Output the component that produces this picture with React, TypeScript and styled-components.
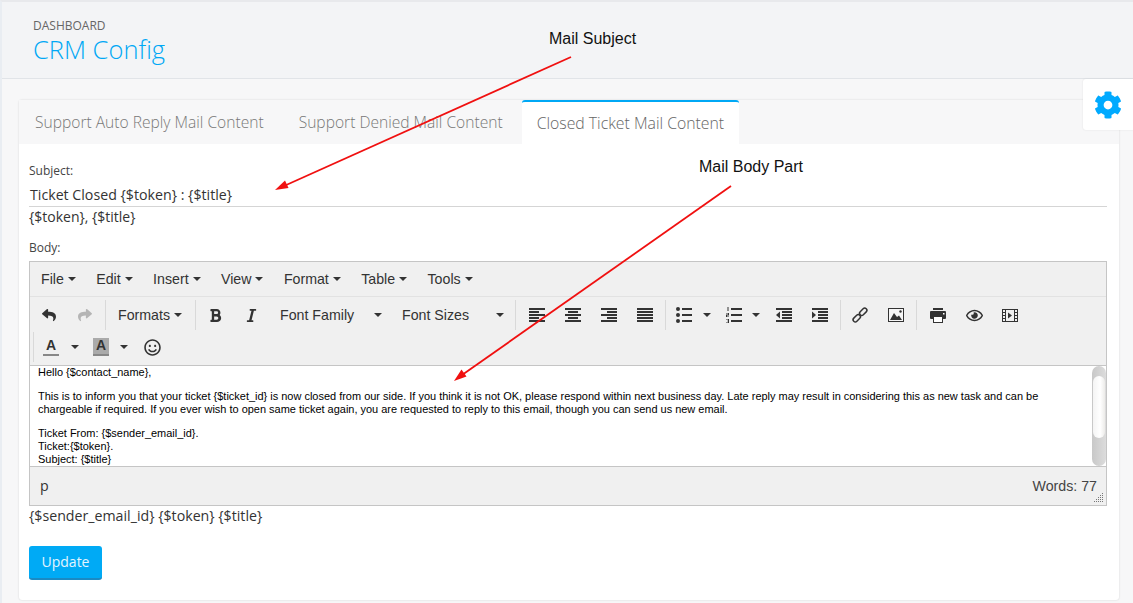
import React from "react";
import styled, { createGlobalStyle } from "styled-components";
import { FaBold, FaCog, FaItalic, FaRegEye, FaRegSmile, FaReply, FaShare } from "react-icons/fa";

const GlobalStyle = createGlobalStyle`
  html, body { margin: 0; padding: 0; background: #f7f7f8; }
  * { box-sizing: border-box; }
`;

const menus = ["File", "Edit", "Insert", "View", "Format", "Table", "Tools"];

const introText =
  "This is to inform you that your ticket {$ticket_id} is now closed from our side. If you think it is not OK, please respond within next business day. Late reply may result in considering this as new task and can be chargeable if required. If you ever wish to open same ticket again, you are requested to reply to this email, though you can send us new email.";

function Lines({ kind }: { kind: "left" | "center" | "right" | "full" }) {
  const rows = [0, 3, 6, 9, 12];
  return (
    <svg width="16" height="14" viewBox="0 0 16 14" fill="#333">
      {rows.map((y, i) => {
        const w = kind === "full" || i % 2 === 0 ? 16 : 10;
        const x = kind === "left" || kind === "full" ? 0 : kind === "center" ? (16 - w) / 2 : 16 - w;
        return <rect key={y} x={x} y={y} width={w} height="2" />;
      })}
    </svg>
  );
}

function BulletList() {
  return (
    <svg width="16" height="16" viewBox="0 0 16 16" fill="#333">
      <circle cx="2" cy="2" r="2" />
      <circle cx="2" cy="8" r="2" />
      <circle cx="2" cy="14" r="2" />
      <rect x="6" y="1" width="10" height="2" />
      <rect x="6" y="7" width="10" height="2" />
      <rect x="6" y="13" width="10" height="2" />
    </svg>
  );
}

function NumberList() {
  return (
    <svg width="16" height="16" viewBox="0 0 16 16" fill="#333">
      <rect x="1.5" y="0" width="1" height="4" />
      <path d="M0 6h3v2.5H1v1h2v.6H0V7.5h2v-1H0zM0 12h3v4H0v-.6h2v-1.1H1v-.6h1v-1.1H0z" />
      <rect x="5" y="1" width="11" height="2" />
      <rect x="5" y="7" width="11" height="2" />
      <rect x="5" y="13" width="11" height="2" />
    </svg>
  );
}

function Indent({ out }: { out?: boolean }) {
  return (
    <svg width="16" height="14" viewBox="0 0 16 14" fill="#333">
      <rect x="0" y="0" width="16" height="2" />
      <rect x="6" y="3" width="10" height="2" />
      <rect x="6" y="6" width="10" height="2" />
      <rect x="6" y="9" width="10" height="2" />
      <rect x="0" y="12" width="16" height="2" />
      <path d={out ? "M4 3.5v7L0 7z" : "M0 3.5v7L4 7z"} />
    </svg>
  );
}

function LinkIcon() {
  return (
    <svg width="16" height="16" viewBox="0 0 16 16" fill="none" stroke="#333" strokeWidth="1.5">
      <rect x="-4" y="-2.2" width="8.5" height="4.4" rx="2.2" transform="translate(4.6 11.4) rotate(-45)" />
      <rect x="-4.5" y="-2.2" width="8.5" height="4.4" rx="2.2" transform="translate(11.4 4.6) rotate(-45)" />
    </svg>
  );
}

function ImageIcon() {
  return (
    <svg width="16" height="14" viewBox="0 0 16 14">
      <rect x="0.5" y="0.5" width="15" height="13" fill="#f6f6f6" stroke="#333" />
      <path d="M2 12l4-7 3 4 2-1.5 3 4.5z" fill="#333" />
      <circle cx="12.5" cy="3.5" r="1.2" fill="#333" />
    </svg>
  );
}

function PrintIcon() {
  return (
    <svg width="16" height="15" viewBox="0 0 16 15" fill="#333">
      <rect x="3" y="0" width="10" height="2" />
      <rect x="0" y="3" width="16" height="8" rx="1" />
      <rect x="3.5" y="8.5" width="9" height="6" fill="#fff" stroke="#333" />
      <rect x="13" y="5" width="1.5" height="1.5" fill="#fff" />
    </svg>
  );
}

function MediaIcon() {
  return (
    <svg width="16" height="13" viewBox="0 0 16 13" fill="#333">
      <path fillRule="evenodd" d="M0 0h16v13H0zM1 1v2h2V1zM1 4v2h2V4zM1 7v2h2V7zM1 10v2h2v-2zM13 1v2h2V1zM13 4v2h2V4zM13 7v2h2V7zM13 10v2h2v-2zM4 1v11h8V1z" />
      <path d="M6 3.5v6l4-3z" />
    </svg>
  );
}

export default function App() {
  return (
    <Page>
      <GlobalStyle />
      <Header>
        <Crumb>Dashboard</Crumb>
        <Title>CRM Config</Title>
      </Header>

      <Card>
        <Tabs>
          <Tab>Support Auto Reply Mail Content</Tab>
          <Tab>Support Denied Mail Content</Tab>
          <Tab $active>Closed Ticket Mail Content</Tab>
        </Tabs>
        <Pane>
          <Label>Subject:</Label>
          <SubjectInput>{"Ticket Closed {$token} : {$title}"}</SubjectInput>
          <Hint>{"{$token}, {$title}"}</Hint>
          <BodyLabel>Body:</BodyLabel>

          <Editor>
            <MenuBar>
              {menus.map((m) => (
                <MenuItem key={m}>
                  {m}
                  <Caret />
                </MenuItem>
              ))}
            </MenuBar>
            <Toolbar>
              <ToolRow>
                <Group>
                  <IconBtn><FaReply size={14} color="#333" /></IconBtn>
                  <IconBtn><FaShare size={14} color="#b5b5b5" /></IconBtn>
                </Group>
                <Group>
                  <MenuItem $tool>Formats<Caret /></MenuItem>
                </Group>
                <Group $start={1}>
                  <IconBtn><FaBold size={15} color="#333" /></IconBtn>
                  <IconBtn><FaItalic size={15} color="#333" /></IconBtn>
                  <ListBox>Font Family<Caret /></ListBox>
                  <ListBox>Font Sizes<Caret /></ListBox>
                </Group>
                <Group $start={3}>
                  <IconBtn><Lines kind="left" /></IconBtn>
                  <IconBtn><Lines kind="center" /></IconBtn>
                  <IconBtn><Lines kind="right" /></IconBtn>
                  <IconBtn><Lines kind="full" /></IconBtn>
                </Group>
                <Group>
                  <SplitBtn $gap={11} $end={5}><BulletList /><Caret /></SplitBtn>
                  <SplitBtn $gap={10} $end={6}><NumberList /><Caret /></SplitBtn>
                  <IconBtn><Indent out /></IconBtn>
                  <IconBtn><Indent /></IconBtn>
                </Group>
                <Group $start={1}>
                  <IconBtn><LinkIcon /></IconBtn>
                  <IconBtn><ImageIcon /></IconBtn>
                </Group>
                <Group $last $start={3}>
                  <IconBtn><PrintIcon /></IconBtn>
                  <IconBtn><FaRegEye size={17} color="#333" /></IconBtn>
                  <IconBtn><MediaIcon /></IconBtn>
                </Group>
              </ToolRow>
              <ToolRow>
                <Group $last $lead>
                  <SplitBtn $gap={12} $end={3} $flush>
                    <ColorA>A</ColorA>
                    <Caret />
                  </SplitBtn>
                  <SplitBtn $gap={11} $end={6} $wide>
                    <ColorA $filled>A</ColorA>
                    <Caret />
                  </SplitBtn>
                  <IconBtn><FaRegSmile size={17} color="#333" /></IconBtn>
                </Group>
              </ToolRow>
            </Toolbar>
            <Content>
              <p>{"Hello {$contact_name},"}</p>
              <p>{introText}</p>
              <p>
                {"Ticket From: {$sender_email_id}."}<br />
                {"Ticket:{$token}."}<br />
                {"Subject: {$title}"}
              </p>
              <ScrollTrack>
                <ScrollThumb />
              </ScrollTrack>
            </Content>
            <StatusBar>
              <span>p</span>
              <Words>Words: 77</Words>
              <Grip width="10" height="10" viewBox="0 0 10 10" fill="#777">
                {[[8, 0], [6, 2], [8, 2], [4, 4], [6, 4], [8, 4], [2, 6], [4, 6], [6, 6], [8, 6], [0, 8], [2, 8], [4, 8], [6, 8], [8, 8]].map(([x, y]) => (
                  <rect key={`${x}-${y}`} x={x} y={y} width="1" height="1" />
                ))}
              </Grip>
            </StatusBar>
          </Editor>

          <TokensHint>{"{$sender_email_id} {$token} {$title}"}</TokensHint>
          <UpdateButton>Update</UpdateButton>
        </Pane>
      </Card>

      <SettingsTab>
        <FaCog size={28} color="#00aaff" />
      </SettingsTab>

      <Note $x={549} $y={30}>Mail Subject</Note>
      <Note $x={699} $y={158}>Mail Body Part</Note>
      <Arrows viewBox="0 0 1133 603" width="1133" height="603">
        <line x1="571" y1="57" x2="284" y2="186" stroke="#f01010" strokeWidth="1.8" />
        <path d="M275 190l10-9.5 3.5 7.5z" fill="#f01010" />
        <line x1="731" y1="186" x2="462" y2="375" stroke="#f01010" strokeWidth="1.8" />
        <path d="M454 381l7.5-11.5 5 7z" fill="#f01010" />
      </Arrows>
    </Page>
  );
}

const Page = styled.div`
  position: relative;
  width: 1133px;
  height: 603px;
  overflow: hidden;
  background: #f7f7f8;
  border-left: 2px solid #e9edf2;
  border-top: 2px solid #e8e9ec;
  font-family: "Open Sans", sans-serif;
  color: #333;
`;

const Header = styled.header`
  height: 77px;
  padding: 17px 0 0 31px;
  background: #f3f4f6;
  border-bottom: 1px solid #e1e4e8;
`;

const Crumb = styled.div`
  font-size: 12px;
  line-height: 13px;
  text-transform: uppercase;
  color: #666;
`;

const Title = styled.h1`
  margin: 0;
  font-size: 25.5px;
  line-height: 34px;
  font-weight: 300;
  color: #00a8f5;
`;

const Card = styled.section`
  margin: 21px 14px 0 17px;
  height: 500px;
  background: #fff;
  border-radius: 3px;
  box-shadow: 0 0 2px rgba(0, 0, 0, 0.16);
`;

const Tabs = styled.nav`
  display: flex;
  height: 44px;
  background: #f7f7f8;
`;

const Tab = styled.div<{ $active?: boolean }>`
  padding: ${(p) => (p.$active ? "11px 15px 0" : "12px 19px 0 17px")};
  font-size: ${(p) => (p.$active ? 15.8 : 15.6)}px;
  font-weight: 300;
  line-height: 20px;
  color: #777;

  &:first-child {
    padding-left: 16px;
    padding-right: 18px;
  }

  ${(p) =>
    p.$active &&
    `
    background: #fff;
    color: #666;
    border-top: 2px solid #00a8f5;
    border-radius: 3px 3px 0 0;
  `}
`;

const Pane = styled.div`
  padding: 18px 12px 0 10px;
`;

const Label = styled.div`
  font-size: 12px;
  line-height: 17px;
  color: #444;
`;

const SubjectInput = styled.div`
  margin-top: 6px;
  padding: 0 1px 2px;
  height: 22px;
  font-size: 14.2px;
  line-height: 20px;
  color: #333;
  border-bottom: 1px solid #d5d5d5;
`;

const Hint = styled.div`
  font-size: 14px;
  line-height: 20px;
  color: #333;
`;

const BodyLabel = styled(Label)`
  margin-top: 12px;
  margin-bottom: 5px;
`;

const Editor = styled.div`
  width: 1078px;
  border: 1px solid #c5c5c5;
  background: #f0f0f0;
  font-family: "Liberation Sans", Arial, sans-serif;
`;

const MenuBar = styled.div`
  display: flex;
  align-items: center;
  gap: 20.4px;
  height: 35px;
  padding: 0 0 0 11px;
  border-bottom: 1px solid #e2e2e2;
`;

const MenuItem = styled.div<{ $tool?: boolean }>`
  display: inline-flex;
  align-items: center;
  gap: 4px;
  font-size: 14.2px;
  color: #333;
  ${(p) => p.$tool && "padding: 0 11px 0 12px;"}
`;

const Caret = styled.span`
  display: inline-block;
  width: 0;
  height: 0;
  border-left: 4px solid transparent;
  border-right: 4px solid transparent;
  border-top: 4px solid #333;
`;

const Toolbar = styled.div`
  height: 69px;
  padding: 2px 0 0 1px;
  border-bottom: 1px solid #c5c5c5;
`;

const ToolRow = styled.div`
  display: flex;
  height: 32px;
`;

const Group = styled.div<{ $last?: boolean; $lead?: boolean; $start?: number }>`
  display: flex;
  align-items: center;
  height: 30px;
  margin-top: 1px;
  padding-left: ${(p) => p.$start ?? 0}px;
  padding-right: 2px;
  border-right: ${(p) => (p.$last ? "none" : "1px solid #d9d9d9")};
  ${(p) => p.$lead && "margin-left: 2px; border-left: 1px solid #d9d9d9; padding-left: 9px;"}
`;

const IconBtn = styled.div`
  display: flex;
  align-items: center;
  justify-content: center;
  width: 36px;
  height: 30px;
`;

const SplitBtn = styled.div<{ $gap: number; $end: number; $flush?: boolean; $wide?: boolean }>`
  display: flex;
  align-items: center;
  gap: ${(p) => p.$gap}px;
  height: 30px;
  padding: 0 ${(p) => p.$end}px 0 ${(p) => (p.$flush ? 0 : p.$wide ? 11 : 10)}px;
`;

const ListBox = styled.div`
  display: flex;
  align-items: center;
  justify-content: space-between;
  width: 122px;
  padding: 0 9px 0 11px;
  font-size: 14.2px;
  color: #333;
`;

const ColorA = styled.span<{ $filled?: boolean }>`
  display: inline-block;
  width: 16px;
  height: 18px;
  line-height: 15px;
  text-align: center;
  font-size: 14px;
  font-weight: 700;
  color: #333;
  border-bottom: 2px solid #888;
  background: ${(p) => (p.$filled ? "#aaa" : "transparent")};
`;

const Content = styled.div`
  position: relative;
  height: 101px;
  padding: 0 60px 0 8px;
  overflow: hidden;
  background: #fff;
  border-bottom: 1px solid #c5c5c5;
  font-size: 10.98px;
  line-height: 13px;
  color: #000;

  p {
    margin: 0 0 11px;
  }
`;

const ScrollTrack = styled.div`
  position: absolute;
  top: 0;
  right: 0;
  width: 14px;
  height: 100px;
  background: linear-gradient(to right, #c8c8c8, #dcdcdc);
  border-radius: 7px;
  padding: 10px 1px 0;
`;

const ScrollThumb = styled.div`
  height: 62px;
  background: linear-gradient(to right, #f4f4f4, #fff 60%, #ecebe9);
  border-radius: 6px;
`;

const StatusBar = styled.div`
  position: relative;
  display: flex;
  justify-content: space-between;
  align-items: center;
  height: 38px;
  padding: 0 9px 1px 10px;
  font-size: 14.2px;
  color: #333;

  > span:first-child {
    font-family: "Open Sans", sans-serif;
  }
`;

const Words = styled.span`
  color: #444;
`;

const Grip = styled.svg`
  position: absolute;
  right: 2px;
  bottom: 2px;
`;

const TokensHint = styled(Hint)`
  margin-top: 0;
  font-size: 14.2px;
`;

const UpdateButton = styled.button`
  display: block;
  margin-top: 20px;
  width: 73px;
  height: 34px;
  padding: 0 0 1px;
  border: 0;
  border-bottom: 2px solid #1a8ac4;
  border-radius: 3px;
  background: #00aaf5;
  color: #e4f5ff;
  font-family: "Open Sans", sans-serif;
  font-size: 14px;
`;

const SettingsTab = styled.div`
  position: absolute;
  top: 77px;
  right: 0;
  width: 50px;
  height: 51px;
  display: flex;
  align-items: center;
  justify-content: center;
  background: #fff;
  border-radius: 3px 0 0 3px;
  box-shadow: 0 0 2px rgba(0, 0, 0, 0.1);
`;

const Note = styled.div<{ $x: number; $y: number }>`
  position: absolute;
  left: ${(p) => p.$x - 2}px;
  top: ${(p) => p.$y - 2}px;
  font-family: "Liberation Sans", Arial, sans-serif;
  font-size: 16px;
  line-height: 18px;
  color: #111;
`;

const Arrows = styled.svg`
  position: absolute;
  left: -2px;
  top: -2px;
  pointer-events: none;
`;
